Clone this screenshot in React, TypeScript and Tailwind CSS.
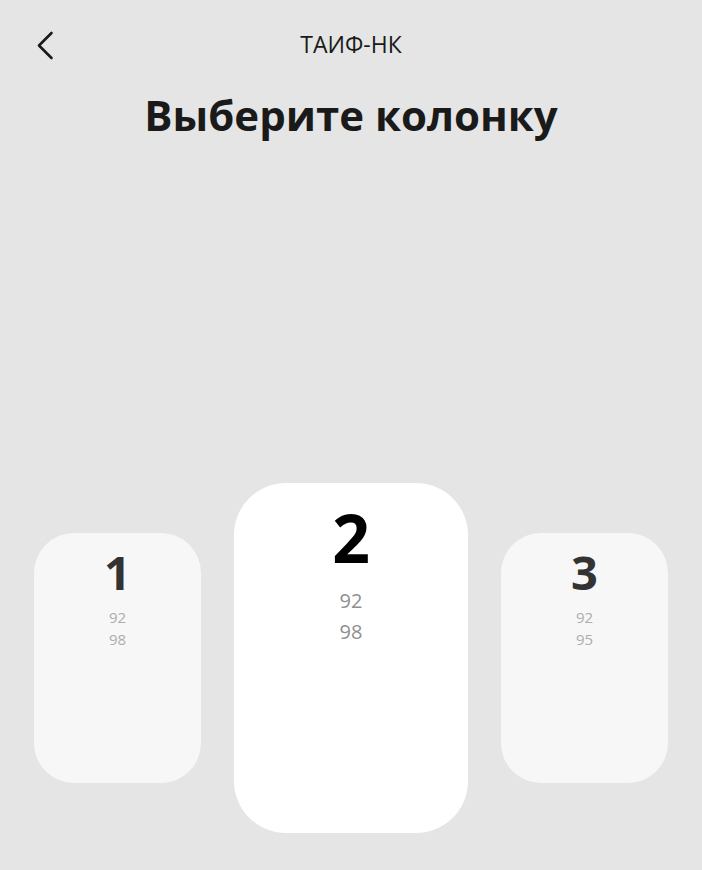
interface Column {
  id: number
  fuels: string[]
}

const columns: Column[] = [
  { id: 1, fuels: ['92', '98'] },
  { id: 2, fuels: ['92', '98'] },
  { id: 3, fuels: ['92', '95'] },
]

const activeId = 2

function ColumnCard({ column, active }: { column: Column; active: boolean }) {
  if (active) {
    return (
      <button className="flex h-[350px] w-[234px] flex-col items-center rounded-[52px] bg-white pt-[21px]">
        <span className="text-[66px] font-bold leading-none text-black">{column.id}</span>
        <div className="mt-[15px] flex flex-col items-center text-[20px] leading-[31px] text-[#8f8f8f]">
          {column.fuels.map((f, i) => (
            <span key={i}>{f}</span>
          ))}
        </div>
      </button>
    )
  }
  return (
    <button className="flex h-[250px] w-[167px] flex-col items-center rounded-[40px] bg-[#f7f7f7] pt-[16px]">
      <span className="text-[47px] font-bold leading-none text-[#333]">{column.id}</span>
      <div className="mt-[10px] flex flex-col items-center text-[15px] leading-[22px] text-[#adadad]">
        {column.fuels.map((f, i) => (
          <span key={i}>{f}</span>
        ))}
      </div>
    </button>
  )
}

export default function App() {
  return (
    <div
      className="flex h-[870px] w-full flex-col bg-[#e5e5e5] pb-[37px]"
      style={{ fontFamily: '"Open Sans", "Noto Sans", sans-serif' }}
    >
      {/* Header */}
      <div className="relative flex h-[90px] items-center justify-center">
        <button className="absolute left-[36px] top-[31px] text-[#1a1a1a]">
          <svg width="19" height="29" viewBox="0 0 19 29" fill="none">
            <polyline
              points="15.5,2 3,14.5 15.5,27"
              stroke="currentColor"
              strokeWidth="2.6"
              strokeLinecap="round"
              strokeLinejoin="round"
            />
          </svg>
        </button>
        <span className="pb-[2px] text-[23px] text-[#1a1a1a]">ТАИФ-НК</span>
      </div>

      <h1 className="text-center text-[42px] font-bold leading-[50px] text-[#1a1a1a]">
        Выберите колонку
      </h1>

      {/* Columns */}
      <div className="mt-auto flex items-center justify-center gap-[33px]">
        {columns.map((c) => (
          <ColumnCard key={c.id} column={c} active={c.id === activeId} />
        ))}
      </div>
    </div>
  )
}
